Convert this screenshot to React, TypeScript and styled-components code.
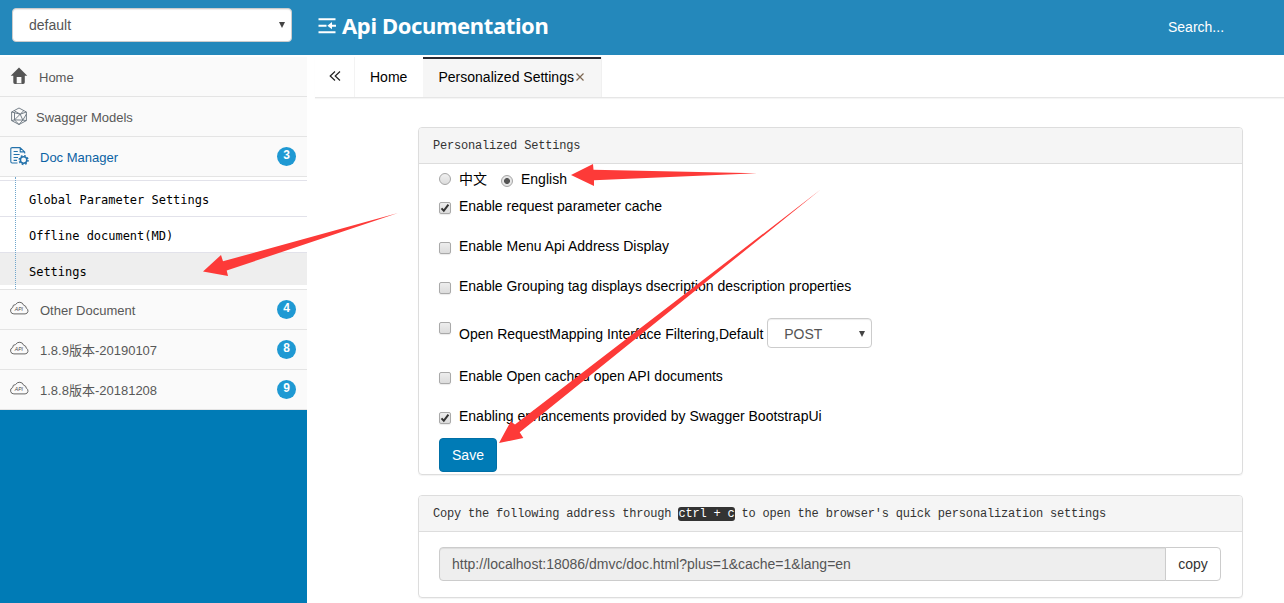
import React from 'react';
import styled, { createGlobalStyle, css } from 'styled-components';

const GlobalStyle = createGlobalStyle`
  *, *::before, *::after { box-sizing: border-box; }
  body {
    margin: 0;
    background: #fff;
    color: #000;
    font-family: "Liberation Sans", "Noto Sans CJK SC", sans-serif;
    font-size: 14px;
    line-height: 20px;
  }
`;

const Page = styled.div`
  position: relative;
  width: 1284px;
  height: 603px;
  overflow: hidden;
  display: flex;
  flex-direction: column;
`;

const Header = styled.header`
  flex: none;
  height: 55px;
  display: flex;
  align-items: flex-start;
  background: #2488bb;
  color: #fff;
`;

const SelectBox = styled.div<{ $w: number; $h: number; $pad: number }>`
  flex: none;
  width: ${(p) => p.$w}px;
  height: ${(p) => p.$h}px;
  padding: 0 6px 0 ${(p) => p.$pad}px;
  display: flex;
  align-items: center;
  justify-content: space-between;
  background: #fff;
  border: 1px solid #ccc;
  border-radius: 4px;
  box-shadow: inset 0 1px 1px rgba(0, 0, 0, 0.075);
  color: #555;
`;

const GroupSelect = styled(SelectBox)`
  margin: 8px 0 0 12px;
`;

const MethodSelect = styled(SelectBox)`
  padding-top: 1px;
`;

const Caret = styled.span`
  border: 3px solid transparent;
  border-top: 6px solid #444;
  border-bottom: 0;
`;

const Brand = styled.h1`
  margin: 8px 0 0 26px;
  display: flex;
  align-items: center;
  gap: 6px;
  flex: 1;
  font: bold 22px/35px "Noto Sans", "Open Sans", sans-serif;
  letter-spacing: -0.37px;
  white-space: nowrap;
`;

const Search = styled.div`
  width: 116px;
  padding-top: 17px;
`;

const Body = styled.div`
  flex: 1;
  display: flex;
  min-height: 0;
`;

const Sidebar = styled.aside`
  width: 307px;
  flex: none;
  display: flex;
  flex-direction: column;
  padding-top: 2px;
`;

const NavItem = styled.div<{ $active?: boolean; $gap?: number }>`
  flex: none;
  height: 40px;
  padding: 0 11px 0 10px;
  display: flex;
  align-items: center;
  background: #fafafa;
  border-bottom: 1px solid #e4e4e4;
  color: ${(p) => (p.$active ? '#0b62a4' : '#585858')};

  svg {
    flex: none;
    margin-right: ${(p) => p.$gap ?? 11}px;
    margin-top: -1px;
  }
`;

const NavLabel = styled.span`
  flex: 1;
  padding-top: 3px;
  font-size: 13px;
  white-space: nowrap;
`;

const Badge = styled.span`
  width: 19px;
  height: 19px;
  border-radius: 50%;
  background: #1f99d3;
  color: #fff;
  font-size: 12px;
  font-weight: bold;
  line-height: 17px;
  text-align: center;
`;

const SubMenu = styled.div`
  position: relative;
  flex: none;
  height: 113px;
  padding-top: 3px;
  border-bottom: 1px solid #e4e4e4;

  &::before {
    content: '';
    position: absolute;
    left: 15px;
    top: 0;
    bottom: 0;
    border-left: 1px dotted #6fa6cc;
    z-index: 1;
  }
`;

const SubItem = styled.div<{ $active?: boolean }>`
  height: ${(p) => (p.$active ? 33 : 36)}px;
  padding-left: 29px;
  border-top: 1px solid #e2e2ea;
  background: ${(p) => (p.$active ? '#eee' : '#fff')};
  font: 12px/38px "DejaVu Sans Mono", monospace;
  letter-spacing: -0.02px;
`;

const SidebarFill = styled.div`
  flex: 1;
  background: #007bb6;
`;

const Main = styled.main`
  flex: 1;
  min-width: 0;
  padding: 2px 0 0 8px;
  display: flex;
  flex-direction: column;
`;

const TabBar = styled.div`
  flex: none;
  height: 41px;
  display: flex;
  border-bottom: 1px solid #e6e6e6;
  box-shadow: 0 1px 1px rgba(0, 0, 0, 0.04);
`;

const TabToggle = styled.div`
  width: 40px;
  display: flex;
  align-items: center;
  justify-content: center;
  border-right: 1px solid #f3f3f3;
  padding-bottom: 3px;
`;

const Tab = styled.div<{ $active?: boolean; $w: number }>`
  width: ${(p) => p.$w}px;
  padding-left: 15px;
  display: flex;
  align-items: center;
  white-space: nowrap;
  ${(p) =>
    p.$active &&
    css`
      gap: 1px;
      padding-left: 15.5px;
      background: #f6f6f6;
      box-shadow: inset 0 2px 0 #292b34;
      margin-left: 1px;
      border-right: 1px solid #f0f0f0;
    `}
`;

const Panels = styled.div`
  padding: 29px 41px 0 103px;
  display: flex;
  flex-direction: column;
  gap: 20px;
`;

const Panel = styled.section<{ $h: number }>`
  height: ${(p) => p.$h}px;
  border: 1px solid #ddd;
  border-radius: 4px;
  box-shadow: 0 1px 1px rgba(0, 0, 0, 0.05);
`;

const PanelHeading = styled.div`
  height: 36px;
  padding-left: 14px;
  background: #f5f5f5;
  border-bottom: 1px solid #ddd;
  border-radius: 3px 3px 0 0;
  color: #333;
  font: 12px/36px "Liberation Mono", monospace;
  letter-spacing: -0.19px;
  white-space: pre;
`;

const Kbd = styled.kbd`
  display: inline-block;
  height: 14px;
  border-radius: 3px;
  background: #333;
  color: #fff;
  font: inherit;
  line-height: 14px;
`;

const PanelBody = styled.div`
  padding-left: 20px;
`;

const LanguageRow = styled.div`
  height: 32px;
  padding-top: 5px;
  display: flex;
  align-items: flex-start;
`;

const Radio = styled.span<{ $on?: boolean }>`
  width: 12px;
  height: 12px;
  margin: ${(p) => (p.$on ? '6px 8px 0 14px' : '4px 8px 0 0')};
  border: 1px solid #a5a5a5;
  border-radius: 50%;
  background: ${(p) =>
    p.$on
      ? 'radial-gradient(circle, #555 0 2.6px, #e6e6e6 3.3px)'
      : 'linear-gradient(#f0f0f0, #dcdcdc)'};
`;

const CheckRow = styled.div<{ $h: number }>`
  height: ${(p) => p.$h}px;
  display: flex;
  align-items: flex-start;
  gap: 8px;
`;

const CheckBox = styled.span`
  width: 12px;
  height: 12px;
  margin-top: 6px;
  border: 1px solid #a9a9a9;
  border-radius: 2px;
  background: linear-gradient(#ededed, #dcdcdc);
  box-shadow: 0 1px 1px rgba(0, 0, 0, 0.08);

  svg { display: block; }
`;

const CheckLabel = styled.span<{ $tall?: boolean }>`
  height: ${(p) => (p.$tall ? 32 : 20)}px;
  display: flex;
  align-items: center;
  gap: 4px;
  white-space: nowrap;
  ${(p) => p.$tall && 'padding-top: 2px;'}
`;

const LabelText = styled.span<{ $low?: boolean }>`
  ${(p) => p.$low && 'padding-top: 2px;'}
`;

const SaveButton = styled.button`
  display: block;
  width: 58px;
  height: 34px;
  padding: 0;
  border: 1px solid #006fa6;
  border-radius: 4px;
  background: #007bb6;
  color: #fff;
  font: inherit;
`;

const AddressGroup = styled.div`
  height: 34px;
  margin: 15px 21px 0 0;
  display: flex;
`;

const AddressField = styled.div`
  flex: 1;
  padding-left: 12px;
  border: 1px solid #ccc;
  border-radius: 4px 0 0 4px;
  background: #eee;
  box-shadow: inset 0 1px 1px rgba(0, 0, 0, 0.075);
  color: #555;
  line-height: 32px;
`;

const CopyButton = styled.button`
  width: 56px;
  margin-left: -1px;
  padding: 0;
  border: 1px solid #ccc;
  border-radius: 0 4px 4px 0;
  background: #fff;
  color: #333;
  font: inherit;
`;

const Annotations = styled.svg`
  position: absolute;
  inset: 0;
  pointer-events: none;
`;

const MenuIcon = () => (
  <svg width="18" height="18" viewBox="0 0 18 18" fill="none" stroke="#fff" strokeWidth="1.9">
    <path d="M0.5 2.3h17M0.5 8.7h8M0.5 15.3h17M11 8.7h7" />
    <path d="M9.4 8.7l4.6-3.6v7.2z" fill="#fff" stroke="none" />
  </svg>
);

const HomeIcon = () => (
  <svg width="18" height="18" viewBox="0 0 18 18" fill="#555">
    <path d="M9 0.6l8.3 8.1h-2.5v6.6q0 1.6-1.6 1.6h-1.8v-6.8H6.7v6.8H4.9q-1.6 0-1.6-1.6V8.7H0.7z" />
    <path d="M6.2 16.2h5.4v.7H6.2z" />
  </svg>
);

const ModelsIcon = () => (
  <svg width="18" height="18" viewBox="0 0 18 18" fill="none" stroke="#68737d" strokeWidth="0.9">
    <path d="M9 1l7.4 4v8.6L9 17.5l-7.4-3.9V5z" />
    <path d="M1.6 5l8.6 2.2L16.4 5M4.2 3.7l6 3.5 3.6-3.5M10.2 7.2l2.6 5.9-3.8 4.4M4.5 12.9l8.3.2 3.6-6M4.5 12.9l5.7-5.7M1.6 13.6l2.9-.7V5.6M4.5 12.9L9 17.5M12.8 13.1l3.6.5" />
  </svg>
);

const DocIcon = () => (
  <svg width="19" height="19" viewBox="0 0 19 19" fill="none" stroke="#2472ab" strokeWidth="1.1">
    <path d="M7.5 16H2.2Q.8 16 .8 14.6V1.8Q.8.6 2.2.6H10l4.7 4.3v1.5M10.2.7v4.2h4.4M3.6 4.5h4.2M3.6 7.5h6M3.6 10.5h4.4M3.6 13.4H7" />
    <circle cx="13.6" cy="13" r="3.2" strokeWidth="1.5" />
    <circle cx="13.6" cy="13" r="4.4" strokeWidth="1.5" strokeDasharray="1.7 1.756" />
  </svg>
);

const CloudIcon = () => (
  <svg width="19" height="16" viewBox="0 0 19 16" fill="none" stroke="#666" strokeWidth="1">
    <path d="M3.9 12.9h11.2a3 3 0 0 0 1.2-5.7 3 3 0 0 0-2.6-2.9A4.4 4.4 0 0 0 5.6 3.6a2.8 2.8 0 0 0-2.9 2.9A3.3 3.3 0 0 0 3.9 12.9z" />
    <text x="4.8" y="10.3" fontSize="5" fontStyle="italic" fill="#444" stroke="none">API</text>
  </svg>
);

const CollapseIcon = () => (
  <svg width="12" height="10" viewBox="0 0 12 10" fill="none" stroke="#222" strokeWidth="1.2">
    <path d="M6 .5L1.2 5 6 9.5M11 .5L6.2 5 11 9.5" />
  </svg>
);

const CloseIcon = () => (
  <svg width="10" height="10" viewBox="0 0 10 10" stroke="#7b6651" strokeWidth="1.2">
    <path d="M1.5 1.5l7 7M8.5 1.5l-7 7" />
  </svg>
);

const CheckMark = () => (
  <svg width="10" height="10" viewBox="0 0 10 10" fill="none" stroke="#333" strokeWidth="2">
    <path d="M1.5 5.4l2.3 2.4L8.4 1.7" />
  </svg>
);

const options = [
  { label: 'Enable request parameter cache', checked: true, height: 40 },
  { label: 'Enable Menu Api Address Display', height: 40 },
  { label: 'Enable Grouping tag displays dsecription description properties', height: 40 },
  { label: 'Open RequestMapping Interface Filtering,Default', method: 'POST', height: 50 },
  { label: 'Enable Open cached open API documents', height: 40 },
  { label: 'Enabling enhancements provided by Swagger BootstrapUi', checked: true, height: 32 },
];

const documents = [
  { name: 'Other Document', count: 4 },
  { name: '1.8.9版本-20190107', count: 8 },
  { name: '1.8.8版本-20181208', count: 9 },
];

export default function App() {
  return (
    <Page>
      <GlobalStyle />
      <Header>
        <GroupSelect $w={280} $h={34} $pad={16}>
          default
          <Caret />
        </GroupSelect>
        <Brand>
          <MenuIcon />
          Api Documentation
        </Brand>
        <Search>Search...</Search>
      </Header>
      <Body>
        <Sidebar>
          <NavItem>
            <HomeIcon />
            <NavLabel>Home</NavLabel>
          </NavItem>
          <NavItem $gap={8}>
            <ModelsIcon />
            <NavLabel>Swagger Models</NavLabel>
          </NavItem>
          <NavItem $active>
            <DocIcon />
            <NavLabel>Doc Manager</NavLabel>
            <Badge>3</Badge>
          </NavItem>
          <SubMenu>
            <SubItem>Global Parameter Settings</SubItem>
            <SubItem>Offline document(MD)</SubItem>
            <SubItem $active>Settings</SubItem>
          </SubMenu>
          {documents.map((d) => (
            <NavItem key={d.name}>
              <CloudIcon />
              <NavLabel>{d.name}</NavLabel>
              <Badge>{d.count}</Badge>
            </NavItem>
          ))}
          <SidebarFill />
        </Sidebar>
        <Main>
          <TabBar>
            <TabToggle>
              <CollapseIcon />
            </TabToggle>
            <Tab $w={67}>Home</Tab>
            <Tab $w={179} $active>
              Personalized Settings
              <CloseIcon />
            </Tab>
          </TabBar>
          <Panels>
            <Panel $h={348}>
              <PanelHeading>Personalized Settings</PanelHeading>
              <PanelBody>
                <LanguageRow>
                  <Radio />
                  中文
                  <Radio $on />
                  English
                </LanguageRow>
                {options.map((o) => (
                  <CheckRow key={o.label} $h={o.height}>
                    <CheckBox>{o.checked && <CheckMark />}</CheckBox>
                    <CheckLabel $tall={!!o.method}>
                      <LabelText $low={!!o.method}>{o.label}</LabelText>
                      {o.method && (
                        <MethodSelect $w={105} $h={30} $pad={16}>
                          {o.method}
                          <Caret />
                        </MethodSelect>
                      )}
                    </CheckLabel>
                  </CheckRow>
                ))}
                <SaveButton>Save</SaveButton>
              </PanelBody>
            </Panel>
            <Panel $h={103}>
              <PanelHeading>
                Copy the following address through <Kbd>ctrl + c</Kbd> to open the browser's quick personalization settings
              </PanelHeading>
              <PanelBody>
                <AddressGroup>
                  <AddressField>http://localhost:18086/dmvc/doc.html?plus=1&amp;cache=1&amp;lang=en</AddressField>
                  <CopyButton>copy</CopyButton>
                </AddressGroup>
              </PanelBody>
            </Panel>
          </Panels>
        </Main>
      </Body>
      <Annotations width="1284" height="603" viewBox="0 0 1284 603" fill="#fd3a38">
        <path d="M571 175L593 164L593.5 169.7L757 173.3L594 180.3V186z" />
        <path d="M203 271.5L221 255L223 261.3L398 213L226.7 270.5L228 276z" />
        <path d="M499 443L510.7 421.5L515 424.5L821 189.3L519.7 432.3L523.3 438z" />
      </Annotations>
    </Page>
  );
}
